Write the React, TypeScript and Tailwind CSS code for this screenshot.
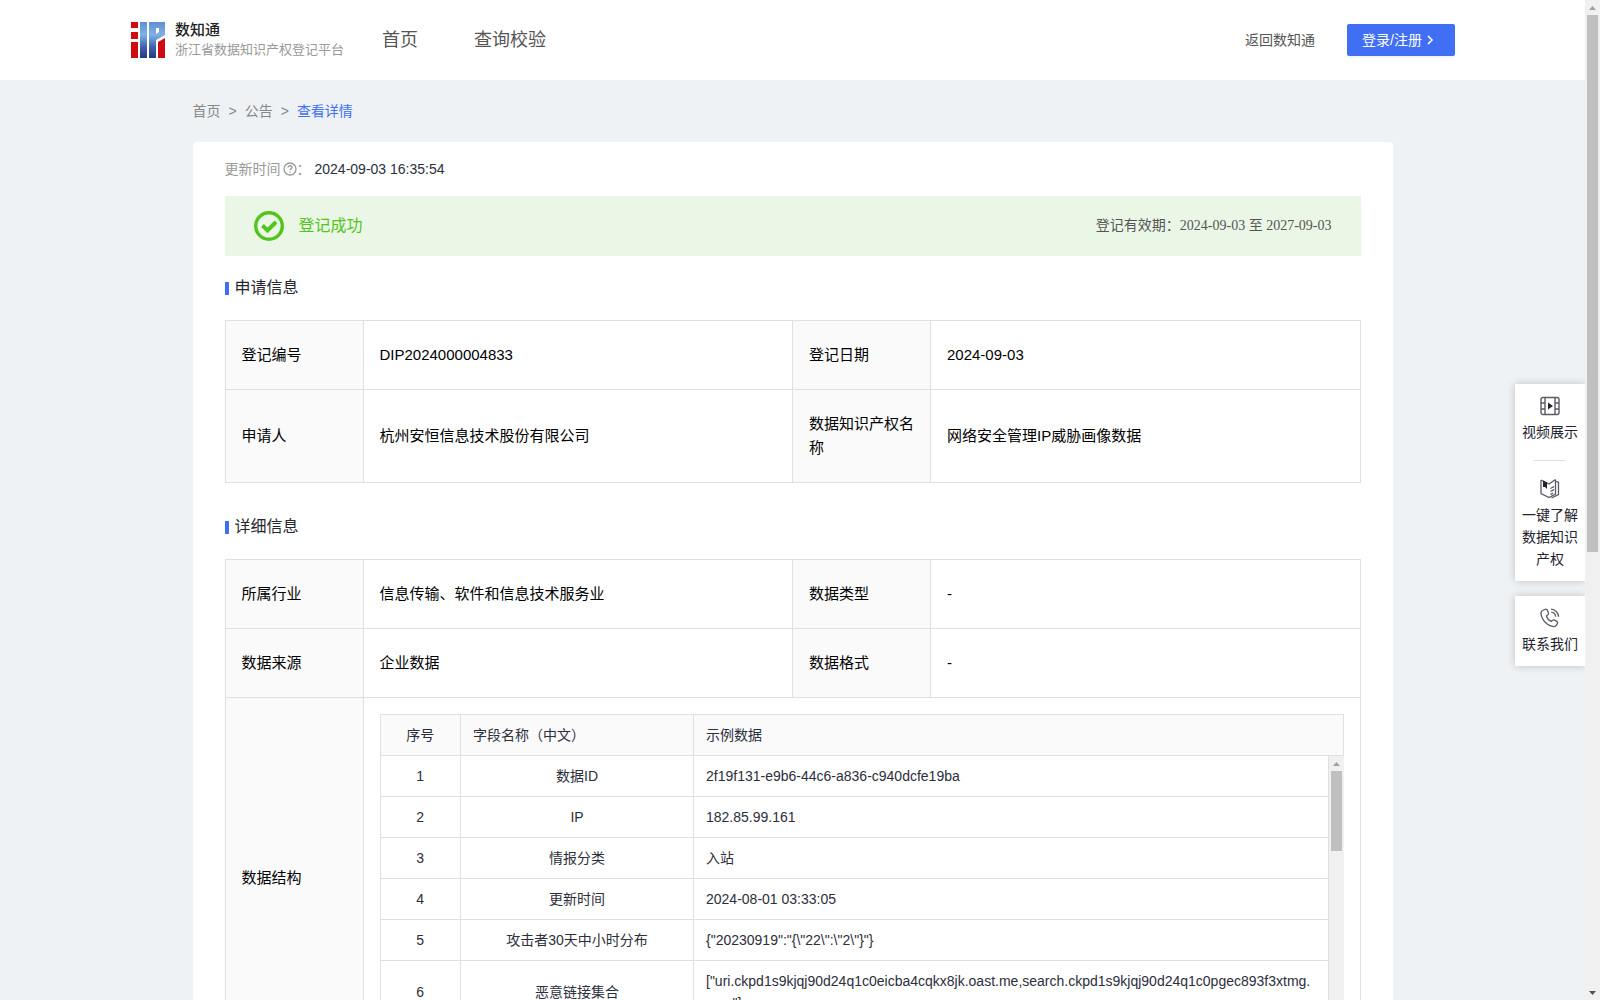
import React from "react";

const sans = "font-['Liberation_Sans','Noto_Sans_CJK_SC',sans-serif]";

interface InfoPair {
  label: string;
  value: string;
}

const applyRows: InfoPair[][] = [
  [
    { label: "登记编号", value: "DIP2024000004833" },
    { label: "登记日期", value: "2024-09-03" },
  ],
  [
    { label: "申请人", value: "杭州安恒信息技术股份有限公司" },
    { label: "数据知识产权名称", value: "网络安全管理IP威胁画像数据" },
  ],
];

const detailRows: InfoPair[][] = [
  [
    { label: "所属行业", value: "信息传输、软件和信息技术服务业" },
    { label: "数据类型", value: "-" },
  ],
  [
    { label: "数据来源", value: "企业数据" },
    { label: "数据格式", value: "-" },
  ],
];

const fields = [
  { name: "数据ID", sample: "2f19f131-e9b6-44c6-a836-c940dcfe19ba" },
  { name: "IP", sample: "182.85.99.161" },
  { name: "情报分类", sample: "入站" },
  { name: "更新时间", sample: "2024-08-01 03:33:05" },
  { name: "攻击者30天中小时分布", sample: '{"20230919":"{\\"22\\":\\"2\\"}"}' },
  {
    name: "恶意链接集合",
    sample: '["uri.ckpd1s9kjqj90d24q1c0eicba4cqkx8jk.oast.me,search.ckpd1s9kjqj90d24q1c0pgec893f3xtmg.com"]',
  },
];

function Logo() {
  return (
    <svg width="34" height="36" viewBox="0 0 34 36" aria-hidden="true">
      <defs>
        <linearGradient id="logoBlue" x1="0" y1="0" x2="0" y2="36" gradientUnits="userSpaceOnUse">
          <stop offset="0" stopColor="#5f8fd2" />
          <stop offset="0.35" stopColor="#7fb0e6" />
          <stop offset="0.7" stopColor="#3f62ab" />
          <stop offset="1" stopColor="#233a80" />
        </linearGradient>
      </defs>
      <path d="M0 0h7v6H0zM0 10h7v7H0zM0 20h7v16H0z" fill="#d00b12" />
      <path d="M9 0h7v36H9z" fill="url(#logoBlue)" />
      <path fillRule="evenodd" d="M18 0h16v13l-9 5v18h-7zM25 6v6l3-2V6z" fill="url(#logoBlue)" />
      <path d="M27 20l7-4v20h-7z" fill="#d00b12" />
    </svg>
  );
}

function SectionTitle({ children }: { children: React.ReactNode }) {
  return (
    <h2 className="flex h-6 items-center gap-[6px] text-base font-normal text-[#252632]">
      <span className="h-[13px] w-1 bg-[#416ff4]" />
      {children}
    </h2>
  );
}

function InfoTable({ rows, children }: { rows: InfoPair[][]; children?: React.ReactNode }) {
  return (
    <table className="w-full table-fixed border-collapse text-[15px] leading-6 text-black">
      <colgroup>
        <col className="w-[138px]" />
        <col />
        <col className="w-[138px]" />
        <col />
      </colgroup>
      <tbody>
        {rows.map((row) => (
          <tr key={row[0].label}>
            {row.map((item) => (
              <React.Fragment key={item.label}>
                <th scope="row" className="border border-[#e0e0e0] bg-[#fafafa] px-4 py-[22px] text-left font-normal">
                  {item.label}
                </th>
                <td className="border border-[#e0e0e0] px-4 py-[22px]">{item.value}</td>
              </React.Fragment>
            ))}
          </tr>
        ))}
        {children}
      </tbody>
    </table>
  );
}

function ScrollTrack({ thumb, down }: { thumb: string; down?: boolean }) {
  return (
    <div className="flex w-[15px] shrink-0 flex-col items-center bg-[#f0f0f0]" aria-hidden="true">
      <svg width="15" height="15" viewBox="0 0 15 15" className="shrink-0">
        <path d="M4 10h7L7.5 6z" fill="#a0a0a0" />
      </svg>
      <div className={"w-[11px] bg-[#c0c0c0] " + thumb} />
      {down && (
        <svg width="15" height="15" viewBox="0 0 15 15" className="mt-auto shrink-0">
          <path d="M4 6h7l-3.5 4z" fill="#505050" />
        </svg>
      )}
    </div>
  );
}

function FieldTable() {
  return (
    <div className="text-sm text-[#2c2e3b]">
      <div className="border border-[#e0e0e0] bg-[#fafafa]">
        <table className="w-full table-fixed border-collapse">
          <thead>
            <tr className="h-10">
              <th className="w-20 border-r border-[#e0e0e0] text-center font-normal">序号</th>
              <th className="w-[233px] border-r border-[#e0e0e0] px-3 text-left font-normal">字段名称（中文）</th>
              <th className="px-3 text-left font-normal">示例数据</th>
            </tr>
          </thead>
        </table>
      </div>
      <div className="flex h-[286px] overflow-hidden">
        <div className="min-w-0 flex-1 border-x border-[#e0e0e0]">
          <table className="w-full table-fixed border-collapse">
            <tbody>
              {fields.map((field, i) => (
                <tr key={field.name} className="border-b border-[#e0e0e0]">
                  <td className="w-20 border-r border-[#e0e0e0] text-center">{i + 1}</td>
                  <td className="w-[233px] border-r border-[#e0e0e0] px-3 text-center">{field.name}</td>
                  <td className="px-3 py-[9px] leading-[22px] break-words">{field.sample}</td>
                </tr>
              ))}
            </tbody>
          </table>
        </div>
        <ScrollTrack thumb="h-20" />
      </div>
    </div>
  );
}

function SideTools() {
  const box = "flex w-[70px] flex-col items-center bg-white text-sm leading-[22px] text-[#22232e] shadow-[0_0_8px_rgba(0,0,0,0.2)]";
  return (
    <aside className="absolute top-[384px] right-0 flex flex-col gap-[15px]">
      <div className={box + " h-[197px] pt-3"}>
        <a href="#video" className="flex flex-col items-center">
          <svg width="20" height="20" viewBox="0 0 20 20" fill="none" stroke="#5a5b64" strokeWidth="1.4" aria-hidden="true">
            <rect x="1" y="1.5" width="18" height="17" rx="2" />
            <path d="M5 1.5v17M15 1.5v17M1 7h4M1 13h4M15 7h4M15 13h4" />
            <path d="M8 6.5l5 3.5-5 3.5z" fill="#22232e" stroke="none" />
          </svg>
          <span className="mt-[5px] whitespace-nowrap">视频展示</span>
        </a>
        <div className="mt-[17px] h-px w-8 shrink-0 bg-[#e0e0e0]" />
        <a href="#guide" className="mt-[17px] flex flex-col items-center text-center">
          <svg width="20" height="21" viewBox="0 0 20 21" fill="none" stroke="#5a5b64" strokeWidth="1.3" aria-hidden="true">
            <path d="M1 2l8 4 6.500-4.500M1 2v13.500l8 4 6.500-3.500V1.500" />
            <path d="M16 3.500l2.500.8v12.200l-7 3.500M10.500 10.500l3.500-1.800M10.500 13.500l3.500-1.800M10.500 16.300l2.500-1.200" />
            <path d="M3 2.500l4 2v6.500l-2-2-2 0z" fill="#22232e" stroke="none" />
          </svg>
          <span className="mt-[5px] w-14">一键了解数据知识产权</span>
        </a>
      </div>
      <a href="#contact" className={box + " h-[70px] pt-3"}>
        <svg width="20" height="20" viewBox="0 0 20 20" fill="none" stroke="#5a5b64" strokeWidth="1.3" aria-hidden="true">
          <path d="M3.500 2L6 1.200c.8 0 1.200.5 1.500 1.200l1 2.600c.2.900-.2 1.400-1 2l-1 .8c.6 2.500 2.500 4.600 4.800 5.600l1.200-1.100c.6-.5 1.200-.6 2-.2l2.400 1.300c.8.5.9 1.200.5 2l-1 1.800c-.6.9-1.500 1.500-2.600 1.400C7.500 18.200 1.500 12 1 5.200.9 3.700 2 2.500 3.500 2z" />
          <path d="M11 1.200c4 .2 7.300 3.400 7.600 7.500M11.200 4.200c2.400.2 4.200 2 4.500 4.500" />
        </svg>
        <span className="mt-[5px] whitespace-nowrap">联系我们</span>
      </a>
    </aside>
  );
}

export default function App(): React.JSX.Element {
  return (
    <div className={"flex h-screen overflow-hidden " + sans}>
      <div className="relative min-w-0 flex-1 overflow-hidden bg-[#eef2f5]">
        <header className="flex h-20 items-center bg-white pr-[130px] pl-[131px]">
          <a href="#home" className="flex items-center gap-[10px]">
            <Logo />
            <span className="flex flex-col">
              <span className="text-[15px] leading-5 font-medium text-[#222]">数知通</span>
              <span className="text-[13px] leading-5 text-[#999]">浙江省数据知识产权登记平台</span>
            </span>
          </a>
          <nav className="ml-[38px] flex gap-14 text-lg text-[#555]">
            <a href="#index">首页</a>
            <a href="#query">查询校验</a>
          </nav>
          <a href="#back" className="ml-auto text-sm text-[#555]">
            返回数知通
          </a>
          <button
            type="button"
            className="ml-8 flex h-8 w-[108px] items-center gap-[2px] rounded-[2px] bg-[#416ff4] pl-[15px] text-sm text-white shadow-[0_2px_0_rgba(0,0,0,0.045)]"
          >
            登录/注册
            <svg width="12" height="12" viewBox="0 0 12 12" fill="none" stroke="currentColor" strokeWidth="1.6" aria-hidden="true">
              <path d="M4 2l4 4-4 4" />
            </svg>
          </button>
        </header>

        <main className="mx-auto w-[1200px] max-w-full">
          <nav className="flex h-[62px] items-center gap-2 text-sm text-[#888]">
            <a href="#index">首页</a>
            <span>&gt;</span>
            <a href="#notice">公告</a>
            <span>&gt;</span>
            <a href="#detail" className="text-[#416ff4]">
              查看详情
            </a>
          </nav>

          <div className="rounded-t bg-white px-8 pt-4">
            <div className="flex h-[22px] items-center text-sm text-[#999]">
              更新时间
              <svg width="14" height="14" viewBox="0 0 14 14" fill="none" stroke="#999" strokeWidth="1.3" className="ml-[2px]" aria-hidden="true">
                <circle cx="7" cy="7" r="6" />
                <path d="M5 5.600c0-2.500 4-2.500 4 0 0 1.300-2 1.300-2 2.700M7 9.400v1.300" />
              </svg>
              ：<span className="ml-1 text-[#2c2e3b]">2024-09-03 16:35:54</span>
            </div>

            <div className="mt-4 flex h-[60px] items-center justify-between bg-[#ebf7e6] pr-[29px] pl-[29px]">
              <div className="flex items-center gap-[15px] text-base text-[#52c41a]">
                <svg width="30" height="30" viewBox="0 0 30 30" fill="none" stroke="#52c41a" aria-hidden="true">
                  <circle cx="15" cy="15" r="13.300" strokeWidth="3.400" />
                  <path d="M8.500 14.500l5 5 8.500-8.500" strokeWidth="4" />
                </svg>
                登记成功
              </div>
              <div className="font-['Liberation_Serif','Noto_Sans_CJK_SC',serif] text-sm text-[#555]">
                登记有效期：2024-09-03 至 2027-09-03
              </div>
            </div>

            <div className="py-5">
              <SectionTitle>申请信息</SectionTitle>
            </div>
            <InfoTable rows={applyRows} />

            <div className="pt-8 pb-5">
              <SectionTitle>详细信息</SectionTitle>
            </div>
            <InfoTable rows={detailRows}>
              <tr>
                <th scope="row" className="border border-[#e0e0e0] bg-[#fafafa] px-4 text-left font-normal">
                  数据结构
                </th>
                <td colSpan={3} className="border border-[#e0e0e0] p-4">
                  <FieldTable />
                </td>
              </tr>
            </InfoTable>
          </div>
        </main>

        <SideTools />
      </div>
      <ScrollTrack thumb="h-[537px]" down />
    </div>
  );
}
